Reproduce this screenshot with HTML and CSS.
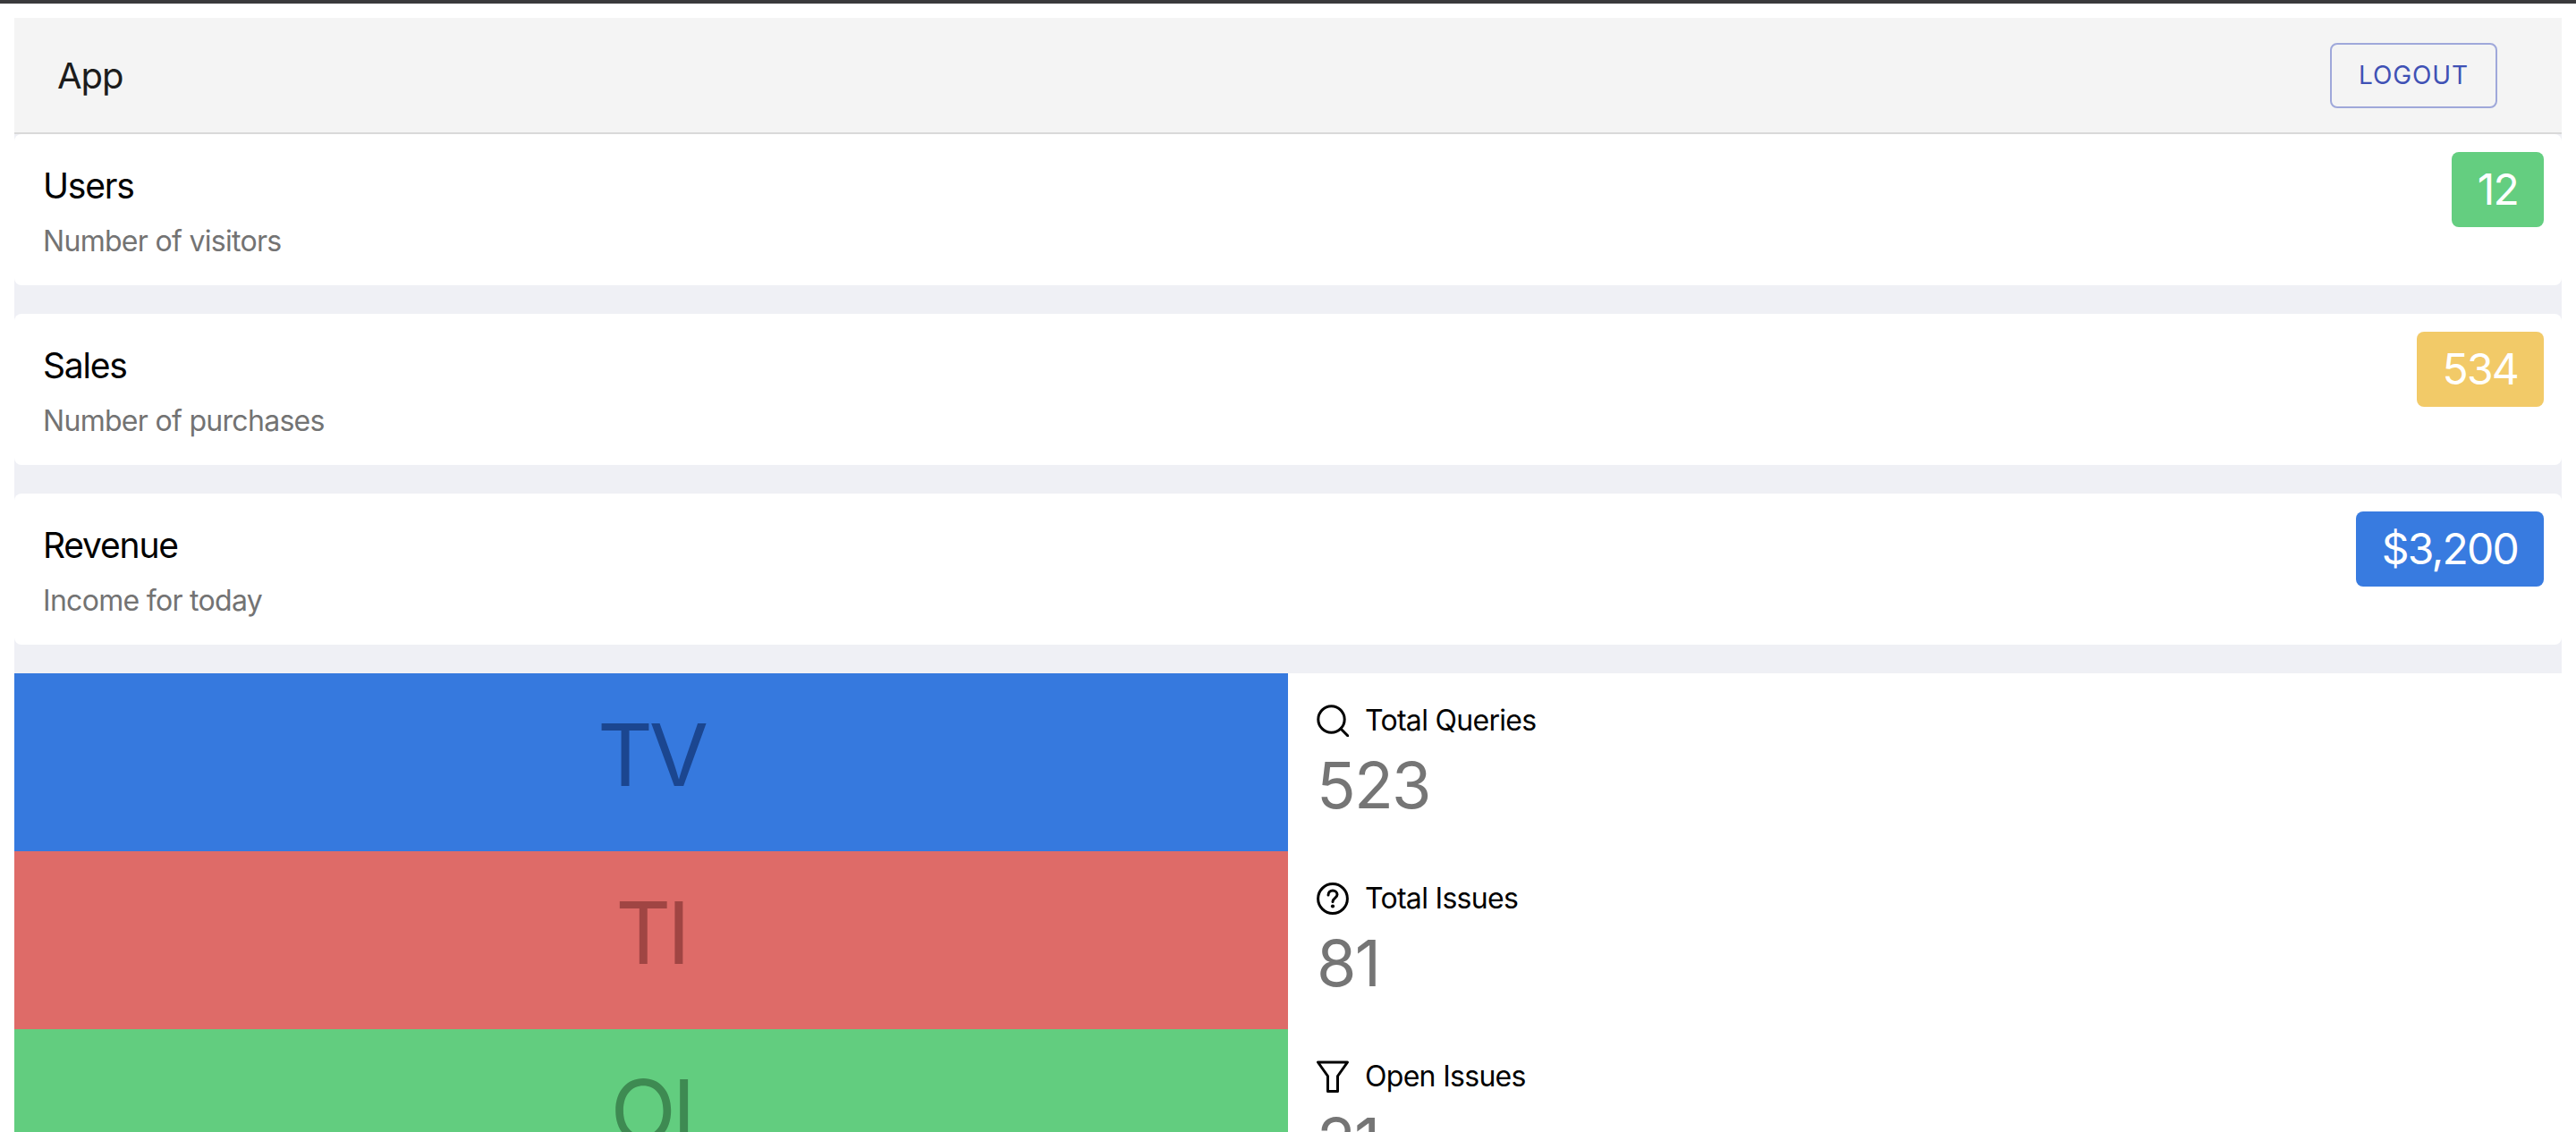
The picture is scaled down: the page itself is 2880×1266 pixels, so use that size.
FILE: index.html
```html
<!DOCTYPE html>
<html lang="en">
<head>
    <meta charset="UTF-8">
    <meta name="viewport" content="width=device-width, initial-scale=1.0">
    <title>App</title>
    <link rel="stylesheet" href="styles.css">
</head>
<body>
    <div class="top-line"></div>

    <div id="mainContent">
        <header class="toolbar">
            <div class="toolbar-title">App</div>
            <button type="button" class="logout">LOGOUT</button>
        </header>

        <div class="card">
            <div>
                <h2>Users</h2>
                <p>Number of visitors</p>
            </div>
            <span class="badge green">12</span>
        </div>

        <div class="card">
            <div>
                <h2>Sales</h2>
                <p>Number of purchases</p>
            </div>
            <span class="badge yellow">534</span>
        </div>

        <div class="card">
            <div>
                <h2>Revenue</h2>
                <p>Income for today</p>
            </div>
            <span class="badge blue">$3,200</span>
        </div>

        <div class="stats">
            <div class="tile tile-blue">TV</div>
            <div class="stat">
                <div class="stat-label">
                    <svg viewBox="0 0 36 36" fill="none" stroke="#000" stroke-width="3">
                        <circle cx="16.5" cy="16.5" r="14.7"/>
                        <path d="M27 27l8 8" stroke-linecap="round"/>
                    </svg>
                    Total Queries
                </div>
                <div class="stat-value">523</div>
            </div>

            <div class="tile tile-red">TI</div>
            <div class="stat">
                <div class="stat-label">
                    <svg viewBox="0 0 36 36" fill="none" stroke="#000" stroke-width="3">
                        <circle cx="18" cy="18" r="16.4"/>
                        <path d="M13 14c0-3 2.200-5 5-5s5 2 5 4.600c0 3.800-5 3.900-5 7.900" stroke-linecap="round"/>
                        <circle cx="18" cy="26.500" r="2.100" fill="#000" stroke="none"/>
                    </svg>
                    Total Issues
                </div>
                <div class="stat-value">81</div>
            </div>

            <div class="tile tile-green">OI</div>
            <div class="stat">
                <div class="stat-label">
                    <svg viewBox="0 0 36 36" fill="none" stroke="#000" stroke-width="3" stroke-linejoin="round">
                        <path d="M1.500 2h33L23.500 17.500V34.500h-11V17.500z"/>
                    </svg>
                    Open Issues
                </div>
                <div class="stat-value">21</div>
            </div>
        </div>
    </div>
</body>
</html>
```

FILE: styles.css
```css
html,
body {
    height: 100%;
}

body {
    font-family: 'Inter', 'Liberation Sans', sans-serif;
    background: white;
    color: black;
    margin: 0;
    padding: 0;
    overflow: hidden;
}

.top-line {
    height: 4px;
    background: #3a3a3c;
}

#mainContent {
    margin: 16px 16px 0;
    background: #eff0f5;
}

.toolbar {
    display: flex;
    justify-content: space-between;
    align-items: center;
    height: 128px;
    padding: 0 72px 0 48px;
    background: #f4f4f4;
    border-bottom: 2px solid #d9d9d9;
}

.toolbar-title {
    font-size: 40px;
    letter-spacing: -1px;
    color: #1c1c1c;
}

.logout {
    width: 187px;
    height: 73px;
    padding: 0;
    border: 2px solid #9fa8da;
    border-radius: 8px;
    background: transparent;
    color: #3f51b5;
    font-family: inherit;
    font-size: 28px;
    letter-spacing: 0.9px;
}

.card {
    display: flex;
    justify-content: space-between;
    align-items: flex-start;
    height: 169px;
    padding: 20px 20px 0 32px;
    box-sizing: border-box;
    margin-bottom: 32px;
    background: white;
    border-radius: 8px;
}

.card h2 {
    margin: 0;
    padding-top: 14px;
    font-size: 39px;
    font-weight: 400;
    line-height: 48px;
    letter-spacing: -1.2px;
}

.card p {
    margin: 18px 0 0;
    font-size: 32px;
    line-height: 40px;
    letter-spacing: -0.7px;
    color: #737373;
}

.badge {
    display: block;
    height: 84px;
    padding: 0 29px;
    border-radius: 8px;
    color: white;
    font-size: 48px;
    line-height: 84px;
    letter-spacing: -1.8px;
}

.green {
    background: #64ce80;
}

.yellow {
    background: #f2ca68;
}

.blue {
    background: #387be0;
}

.stats {
    display: grid;
    grid-template-columns: 1fr 1fr;
    grid-auto-rows: 199px;
    background: white;
}

.tile {
    padding-top: 33px;
    box-sizing: border-box;
    font-size: 96px;
    line-height: 116px;
    letter-spacing: -4px;
    text-align: center;
}

.tile-blue {
    background: #3679de;
    color: #1b4690;
}

.tile-red {
    background: #de6b68;
    color: #a04543;
}

.tile-green {
    background: #62cd7f;
    color: #3e8a52;
}

.stat {
    padding: 33px 32px 0;
}

.stat-label {
    display: flex;
    align-items: center;
    gap: 18px;
    font-size: 32px;
    line-height: 40px;
    letter-spacing: -0.7px;
}

.stat-label svg {
    width: 36px;
    height: 36px;
}

.stat-value {
    margin-top: 10px;
    font-size: 72px;
    line-height: 84px;
    letter-spacing: -1.8px;
    color: #757575;
}
```
